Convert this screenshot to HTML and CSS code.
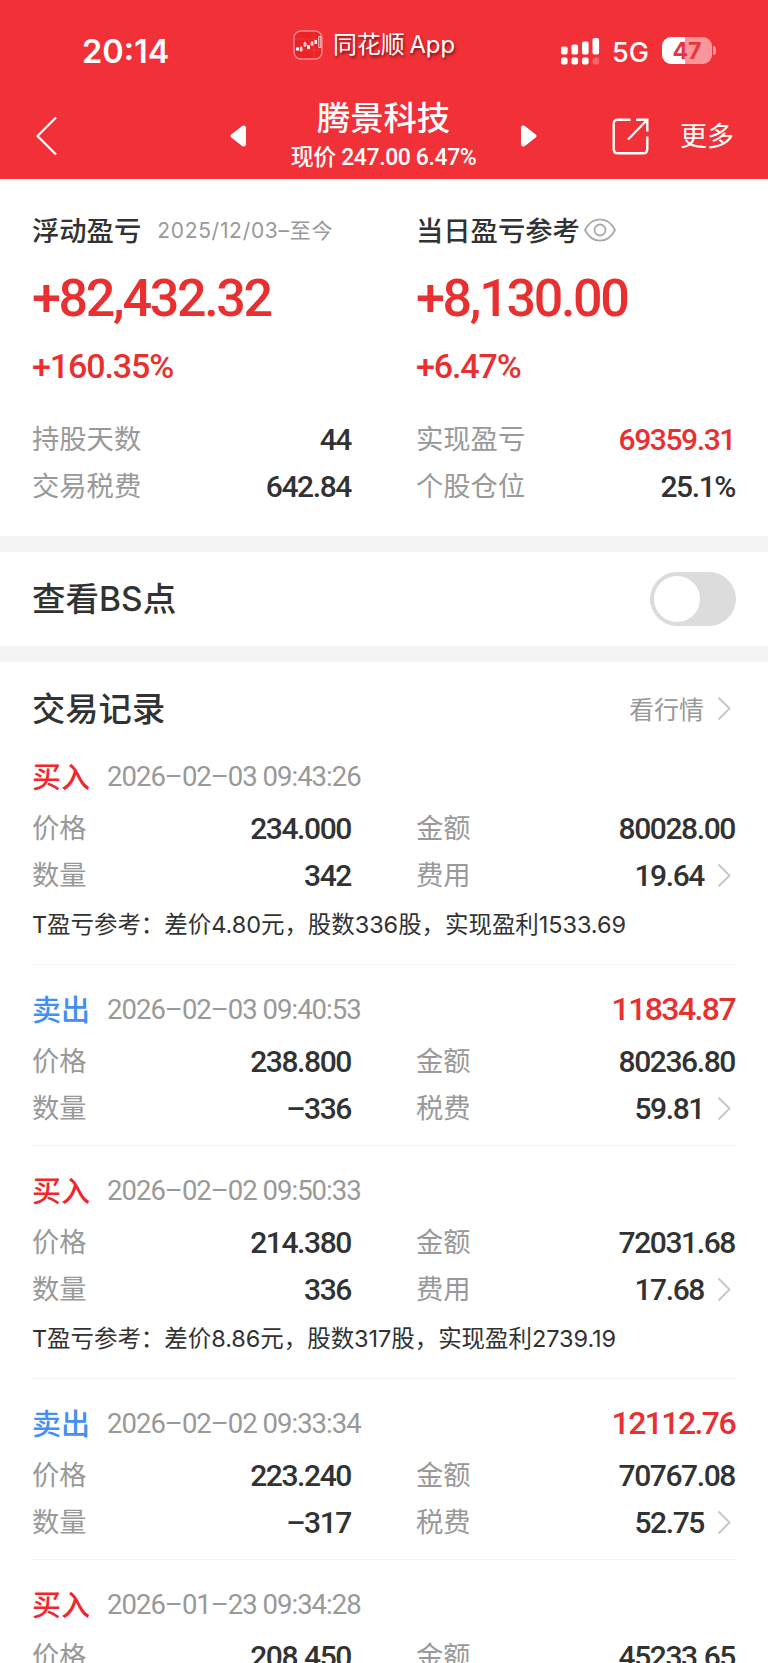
FILE: index.html
```html
<!DOCTYPE html>
<html lang="zh-CN">
    <head>
        <title>腾景科技</title>
        <meta charset="UTF-8">
        <meta name="viewport" content="width=device-width, initial-scale=1.0">
        <link rel="stylesheet" href="styles.css">
    </head>
    <body>
        <div class="header">
            <div class="status-bar">
                <div class="clock">20:14</div>
                <div class="app-name">
                    <svg class="app-icon" width="30" height="30" viewBox="0 0 30 30">
                        <rect x="1" y="1" width="28" height="28" rx="7" fill="#ea2426" stroke="#f9898c" stroke-width="1.4"/>
                        <path d="M2 9h26M2 20h26M21 2v26" stroke="#f04a4c" stroke-width=".5"/>
                        <path d="M3 17.5h3v3H3zM14 15h3v4h-3zM21.500 10h2.500v4h-2.500z" fill="#fff"/>
                        <path d="M7.300 17.500h1.800v3H7.300zM11 13h2v3h-2zM18 12.500h2v2.500h-2zM25.800 6.500h2v11h-2zM8.200 16v6M12 11.500v5M19 11v5" fill="none" stroke="#fff" stroke-width=".8"/>
                    </svg>
                    <span>同花顺 App</span>
                </div>
                <svg class="signal" width="39" height="27" viewBox="0 0 39 27" fill="#fff">
                    <rect x="0" y="8.500" width="6.600" height="8" rx="1.800"/>
                    <rect x="10.500" y="6.500" width="6.600" height="10" rx="1.800"/>
                    <rect x="21" y="3.500" width="6.600" height="13" rx="1.800"/>
                    <rect x="31.500" y="0" width="6.600" height="16.500" rx="1.800"/>
                    <rect x="0" y="19.500" width="6.600" height="7" rx="2"/>
                    <rect x="10.500" y="19.500" width="6.600" height="7" rx="2"/>
                    <rect x="21" y="19.500" width="6.600" height="7" rx="2"/>
                    <rect x="31.500" y="19.500" width="6.600" height="7" rx="2" fill-opacity=".25"/>
                </svg>
                <div class="network">5G</div>
                <div class="battery">47</div>
            </div>
            <div class="nav">
                <svg class="back" width="24" height="42" viewBox="0 0 24 42">
                    <path d="M21 2.500L2.500 21L21 39.500" fill="none" stroke="#fff" stroke-width="2.200"/>
                </svg>
                <svg class="prev" width="16" height="22" viewBox="0 0 16 22">
                    <path d="M12.500 .8L1.200 9.500q-1.400 1.500 0 3l11.300 8.700q3 1.300 3.500-1.700V2.500q-.5-3-3.500-1.700z" fill="#fff"/>
                </svg>
                <div class="stock">
                    <div class="stock-name">腾景科技</div>
                    <div class="stock-price">现价 247.00 6.47%</div>
                </div>
                <svg class="next" width="16" height="22" viewBox="0 0 16 22">
                    <path d="M3.500 .8L14.800 9.500q1.400 1.500 0 3L3.500 21.200q-3 1.300-3.500-1.700V2.500q.5-3 3.500-1.700z" fill="#fff"/>
                </svg>
                <svg class="share" width="37" height="37" viewBox="0 0 37 37" fill="none" stroke="#fff" stroke-width="2.400">
                    <path d="M18.500 1.700H6q-4.300 0-4.300 4.300v25q0 4.300 4.300 4.300h25q4.300 0 4.300-4.300V18.500"/>
                    <path d="M24 1.700h11.300V13.500M35 2L16 21.500"/>
                </svg>
                <div class="more">更多</div>
            </div>
        </div>

        <!-- Profit summary -->
        <div class="summary">
            <div class="column">
                <div class="summary-title">浮动盈亏<span class="period">2025/12/03–至今</span></div>
                <div class="big">+82,432.32</div>
                <div class="percent">+160.35%</div>
                <div class="row"><span>持股天数</span><b>44</b></div>
                <div class="row"><span>交易税费</span><b>642.84</b></div>
            </div>
            <div class="column">
                <div class="summary-title">当日盈亏参考
                    <svg class="eye" width="32" height="24" viewBox="0 0 32 24" fill="none" stroke="#aaa" stroke-width="1.800">
                        <path d="M1 12C4.500 5 10 1.300 16 1.300S27.500 5 31 12C27.500 19 22 22.700 16 22.700S4.500 19 1 12z"/>
                        <circle cx="16" cy="12" r="5.500"/>
                    </svg>
                </div>
                <div class="big">+8,130.00</div>
                <div class="percent">+6.47%</div>
                <div class="row"><span>实现盈亏</span><b class="red">69359.31</b></div>
                <div class="row"><span>个股仓位</span><b>25.1%</b></div>
            </div>
        </div>

        <!-- Buy/sell points switch -->
        <div class="bs-points">
            <span>查看BS点</span>
            <div class="switch"></div>
        </div>

        <!-- Trade records -->
        <div class="records">
            <div class="records-title">
                <span>交易记录</span>
                <div class="quotes">看行情<svg class="arrow" width="15" height="25" viewBox="0 0 15 25"><path d="M1.500 1.500L12.500 12.500L1.500 23.500"/></svg></div>
            </div>

            <div class="record">
                <div class="record-head"><span class="buy">买入</span><span class="time">2026–02–03 09:43:26</span></div>
                <div class="details">
                    <div class="row"><span>价格</span><b>234.000</b></div>
                    <div class="row"><span>金额</span><b>80028.00</b></div>
                    <div class="row"><span>数量</span><b>342</b></div>
                    <div class="row"><span>费用</span><b>19.64</b><svg class="arrow" width="15" height="25" viewBox="0 0 15 25"><path d="M1.500 1.500L12.500 12.500L1.500 23.500"/></svg></div>
                </div>
                <div class="note">T盈亏参考：差价4.80元，股数336股，实现盈利1533.69</div>
            </div>

            <div class="record">
                <div class="record-head"><span class="sell">卖出</span><span class="time">2026–02–03 09:40:53</span><b class="profit">11834.87</b></div>
                <div class="details">
                    <div class="row"><span>价格</span><b>238.800</b></div>
                    <div class="row"><span>金额</span><b>80236.80</b></div>
                    <div class="row"><span>数量</span><b>–336</b></div>
                    <div class="row"><span>税费</span><b>59.81</b><svg class="arrow" width="15" height="25" viewBox="0 0 15 25"><path d="M1.500 1.500L12.500 12.500L1.500 23.500"/></svg></div>
                </div>
            </div>

            <div class="record">
                <div class="record-head"><span class="buy">买入</span><span class="time">2026–02–02 09:50:33</span></div>
                <div class="details">
                    <div class="row"><span>价格</span><b>214.380</b></div>
                    <div class="row"><span>金额</span><b>72031.68</b></div>
                    <div class="row"><span>数量</span><b>336</b></div>
                    <div class="row"><span>费用</span><b>17.68</b><svg class="arrow" width="15" height="25" viewBox="0 0 15 25"><path d="M1.500 1.500L12.500 12.500L1.500 23.500"/></svg></div>
                </div>
                <div class="note">T盈亏参考：差价8.86元，股数317股，实现盈利2739.19</div>
            </div>

            <div class="record">
                <div class="record-head"><span class="sell">卖出</span><span class="time">2026–02–02 09:33:34</span><b class="profit">12112.76</b></div>
                <div class="details">
                    <div class="row"><span>价格</span><b>223.240</b></div>
                    <div class="row"><span>金额</span><b>70767.08</b></div>
                    <div class="row"><span>数量</span><b>–317</b></div>
                    <div class="row"><span>税费</span><b>52.75</b><svg class="arrow" width="15" height="25" viewBox="0 0 15 25"><path d="M1.500 1.500L12.500 12.500L1.500 23.500"/></svg></div>
                </div>
            </div>

            <div class="record">
                <div class="record-head"><span class="buy">买入</span><span class="time">2026–01–23 09:34:28</span></div>
                <div class="details">
                    <div class="row"><span>价格</span><b>208.450</b></div>
                    <div class="row"><span>金额</span><b>45233.65</b></div>
                </div>
            </div>
        </div>
    </body>
</html>
```

FILE: styles.css
```css
* {
    box-sizing: border-box;
}
body {
    margin: 0;
    height: 1663px;
    overflow: hidden;
    background: #fff;
    color: #323232;
    font-family: Inter, "Noto Sans CJK SC", sans-serif;
    white-space: nowrap;
}
svg {
    display: block;
    flex: none;
}
.header {
    height: 179px;
    background: #f23038;
    color: #fff;
}
.status-bar {
    display: flex;
    height: 90px;
    align-items: flex-start;
}
.clock {
    width: 211px;
    margin: 32px 0 0 82px;
    font-size: 32.500px;
    font-weight: 600;
    line-height: 40px;
}
.app-name {
    display: flex;
    align-items: center;
    gap: 10px;
    width: 268px;
    margin-top: 25px;
    font-size: 23.900px;
    line-height: 40px;
    word-spacing: -2px;
    text-shadow: 1px 2px 3px rgba(80, 0, 0, .75);
}
.signal {
    margin-top: 38px;
}
.network {
    width: 50px;
    margin: 33px 0 0 12px;
    font-size: 27px;
    font-weight: 500;
    line-height: 40px;
}
.battery {
    position: relative;
    width: 50px;
    height: 27px;
    margin-top: 37px;
    border-radius: 9px;
    background: linear-gradient(90deg, #fff 23px, #f9989c 23px);
    color: #e5353d;
    font-size: 23px;
    font-weight: 700;
    line-height: 28px;
    text-align: center;
}
.battery:after {
    content: "";
    position: absolute;
    left: 51px;
    top: 9px;
    width: 3px;
    height: 9px;
    border-radius: 0 4px 4px 0;
    background: #f9989c;
}
.nav {
    display: flex;
    align-items: center;
    height: 89px;
}
.back {
    margin: 2px 0 0 35px;
}
.prev {
    margin: 3px 0 0 171px;
}
.stock {
    width: 275px;
    padding-top: 4px;
    text-align: center;
}
.stock-name {
    font-size: 33.300px;
    font-weight: 500;
    line-height: 42px;
}
.stock-price {
    font-family: Roboto, "Noto Sans CJK SC", sans-serif;
    font-size: 23px;
    font-weight: 500;
    line-height: 38px;
    letter-spacing: -.4px;
}
.next {
    margin-top: 3px;
}
.share {
    margin: 3px 0 0 75px;
}
.more {
    margin: 0 0 0 31px;
    font-size: 27px;
}
.summary {
    display: grid;
    grid-template-columns: 320px 320px;
    column-gap: 64px;
    height: 357px;
    padding: 30px 32px 0;
}
.summary-title {
    display: flex;
    align-items: center;
    height: 40px;
    font-size: 27.300px;
    font-weight: 500;
}
.period {
    margin-left: 16px;
    color: #999;
    font-size: 21px;
    font-weight: 400;
    letter-spacing: .7px;
}
.eye {
    margin: 2px 0 0 4px;
}
.big, .percent, .row b, .time, .profit {
    font-family: Roboto, "Noto Sans CJK SC", sans-serif;
    font-weight: 500;
}
.big {
    margin-top: 20px;
    color: #e93030;
    font-size: 52px;
    line-height: 60px;
    letter-spacing: -2.300px;
}
.percent {
    margin: 17px 0 30px;
    color: #e93030;
    font-size: 34px;
    line-height: 40px;
    letter-spacing: -1.100px;
}
.row {
    display: flex;
    align-items: center;
    height: 47px;
    color: #999;
    font-size: 27.300px;
    line-height: 47px;
}
.row b {
    margin: 0 1px 0 auto;
    color: #323232;
    font-size: 30px;
    letter-spacing: -1.400px;
}
.row b.red {
    color: #e93030;
}
.bs-points {
    display: flex;
    align-items: center;
    justify-content: space-between;
    height: 126px;
    padding: 0 32px;
    border-top: 16px solid #f4f4f4;
    border-bottom: 16px solid #f4f4f4;
    font-size: 33.500px;
    font-weight: 500;
}
.bs-points span {
    margin-bottom: 5px;
}
.switch {
    width: 86px;
    height: 54px;
    padding: 4px;
    border-radius: 27px;
    background: #dcdcdc;
}
.switch:before {
    content: "";
    display: block;
    width: 46px;
    height: 46px;
    border-radius: 50%;
    background: #fff;
}
.records {
    padding: 22px 32px 0;
}
.records-title {
    display: flex;
    align-items: center;
    justify-content: space-between;
    height: 48px;
    font-size: 33.300px;
    font-weight: 500;
}
.records-title span {
    margin-bottom: 4px;
}
.quotes {
    display: flex;
    align-items: center;
    color: #999;
    font-size: 25px;
    font-weight: 400;
}
.arrow {
    margin: 0 4px 0 13px;
    fill: none;
    stroke: #c8c8c8;
    stroke-width: 2px;
}
.row .arrow {
    margin-left: 12px;
}
.record {
    padding: 24px 0 13px;
    border-bottom: 1px solid #f4f4f4;
}
.record-head {
    display: flex;
    align-items: center;
    height: 40px;
    margin-bottom: 9px;
}
.buy, .sell {
    margin-bottom: 2px;
    color: #f0282d;
    font-size: 29px;
    font-weight: 500;
}
.sell {
    color: #428ff5;
}
.time {
    margin-left: 17px;
    color: #999;
    font-size: 27.500px;
    font-weight: 400;
    letter-spacing: -1px;
}
.profit {
    margin: 0 1px 0 auto;
    color: #e93030;
    font-size: 32px;
    letter-spacing: -1.600px;
}
.details {
    display: grid;
    grid-template-columns: 320px 320px;
    column-gap: 64px;
}
.note {
    margin: 6px 0;
    color: #323232;
    font-size: 23.500px;
    line-height: 40px;
    letter-spacing: -.06px;
}
```
